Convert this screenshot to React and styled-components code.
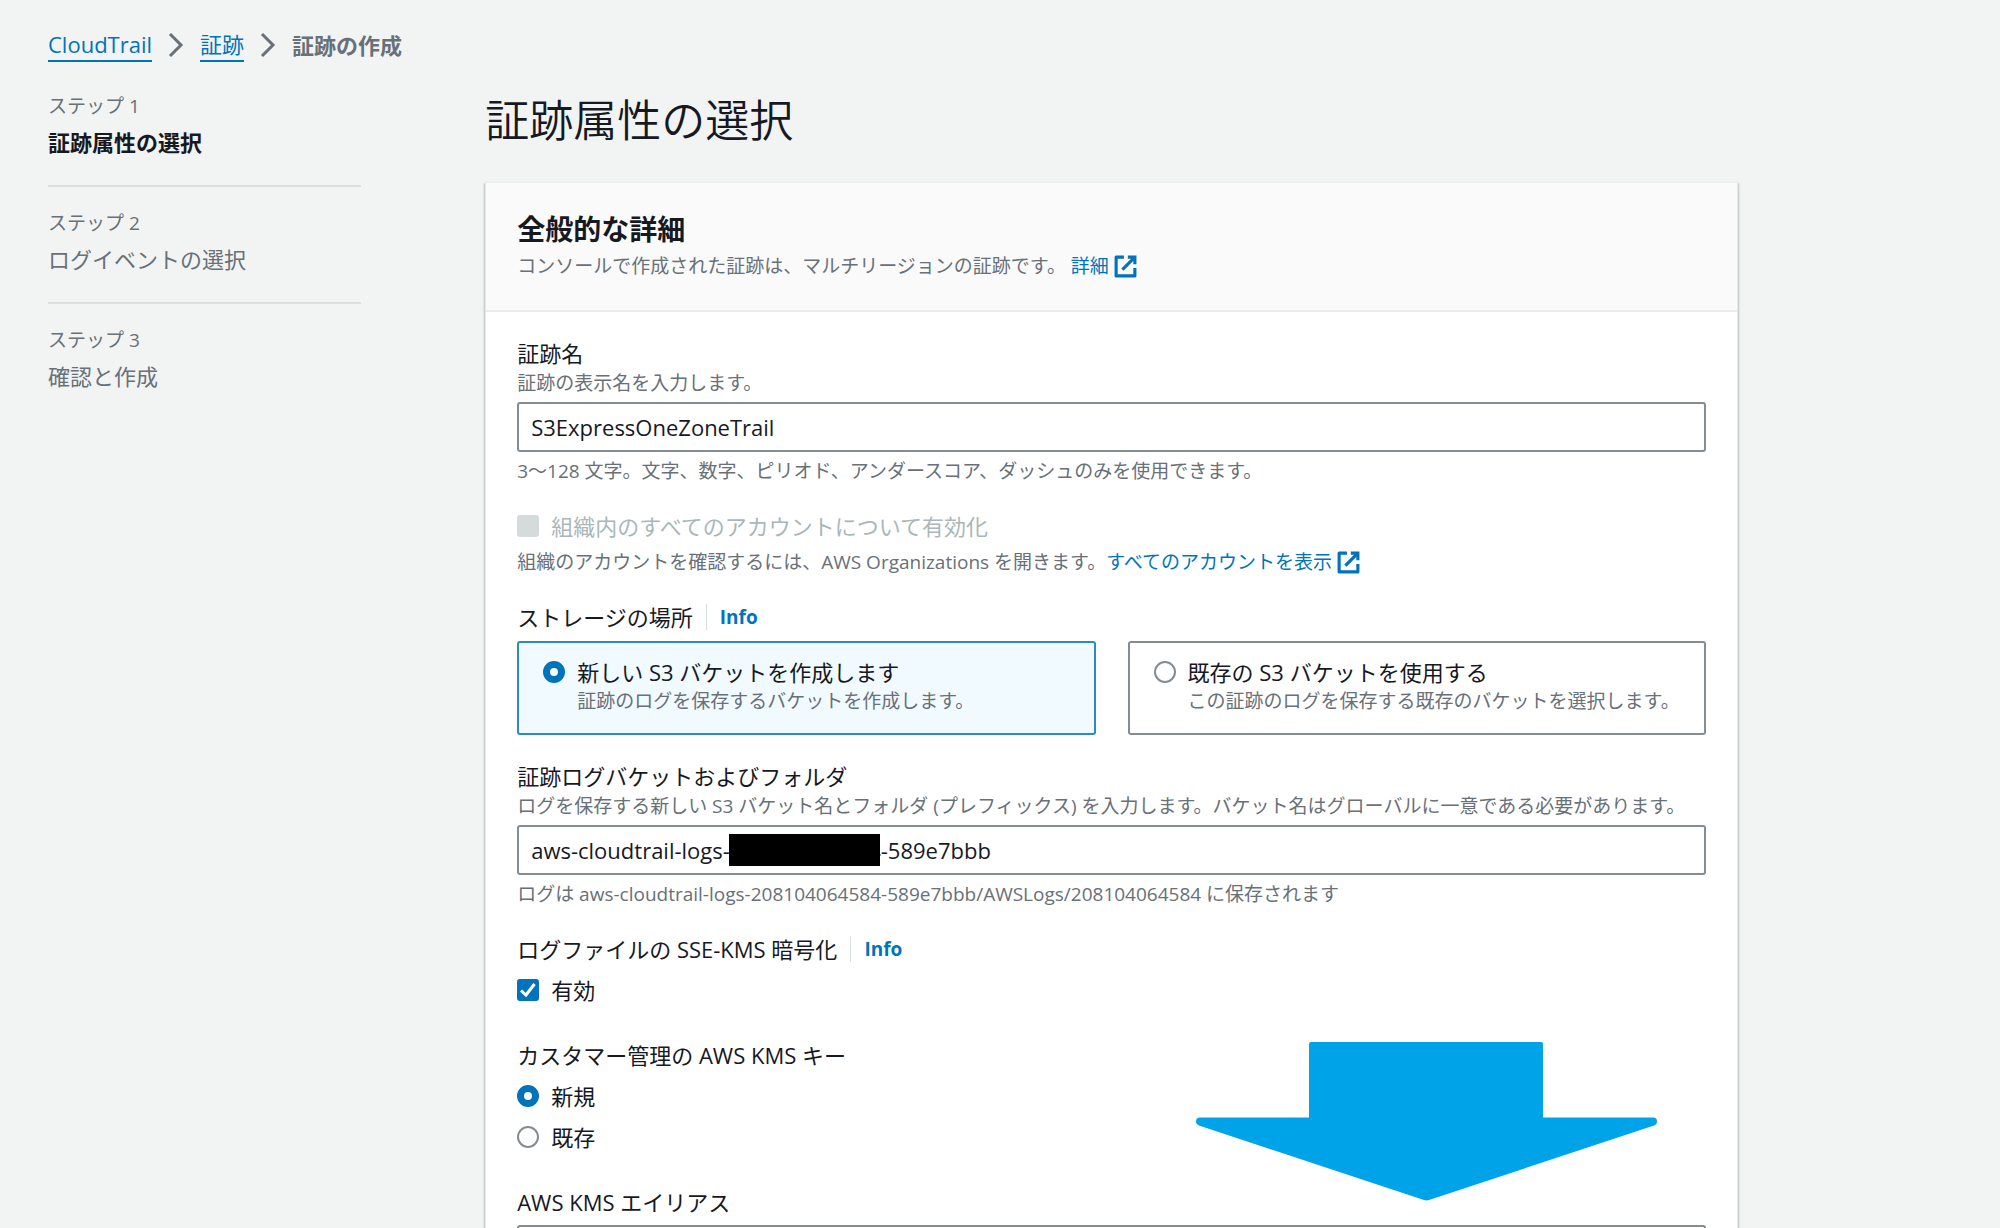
import React, { useState } from 'react';
import styled, { createGlobalStyle } from 'styled-components';

const style = {
    'font': '"Open Sans", "Noto Sans CJK JP", sans-serif',
    'page-background': '#f2f4f4',
    'text-color': '#16191f',
    'text-color-desc': '#687078',
    'text-color-disabled': '#aab7b8',
    'link-color': '#0073bb',
    'border-color': '#858d94',
    'divider-color': '#d9dede',
    'arrow-color': '#00a2e8',
};

const GlobalStyle = createGlobalStyle`
    * {
        box-sizing: border-box;
    }
    body {
        margin: 0;
        background: ${style['page-background']};
        color: ${style['text-color']};
        font-family: ${style['font']};
        font-size: 22px;
        line-height: 30px;
    }
    a {
        color: ${style['link-color']};
        text-decoration: none;
    }
    input {
        font: inherit;
        color: inherit;
    }
`;

const Page = styled.div`
    position: relative;
    height: 100vh;
    overflow-y: auto;
    scrollbar-width: none;
    padding: 28px 262px 0 48px;
`;

const Breadcrumb = styled.nav`
    display: flex;
    align-items: center;
    gap: 16px;
    margin-bottom: 30px;
    line-height: 34px;
    a {
        border-bottom: 2px solid ${style['link-color']};
        line-height: 32px;
    }
    strong {
        color: ${style['text-color-desc']};
    }
`;

const Layout = styled.div`
    display: grid;
    grid-template-columns: 1fr 4fr;
    gap: 124px;
`;

const StepList = styled.ol`
    margin: 0;
    padding: 0;
    list-style: none;
    li + li {
        margin-top: 26px;
        padding-top: 22px;
        border-top: 2px solid ${style['divider-color']};
    }
`;

const StepNumber = styled.div`
    margin-bottom: 5px;
    color: ${style['text-color-desc']};
    font-size: 19px;
    line-height: 28px;
`;

const StepTitle = styled.div`
    color: ${props => props.$active ? style['text-color'] : style['text-color-desc']};
    font-weight: ${props => props.$active ? 700 : 400};
    line-height: 34px;
`;

const Title = styled.h1`
    margin: 0 0 34px;
    font-size: 44px;
    font-weight: 350;
    line-height: 56px;
`;

const Panel = styled.section`
    background: #fff;
    border: 1px solid #e4e8e8;
    border-top-color: #eaeded;
    box-shadow: 0 2px 2px rgba(0, 28, 36, .2), 1px 1px 2px rgba(0, 28, 36, .15), -1px 1px 2px rgba(0, 28, 36, .15);
`;

const PanelHeader = styled.header`
    padding: 26px 31px 30px;
    background: #fafafa;
    border-bottom: 2px solid #eaeded;
    h2 {
        margin: 0 0 3px;
        font-size: 28px;
        line-height: 40px;
    }
`;

const Form = styled.form`
    display: flex;
    flex-direction: column;
    gap: 26px;
    padding: 26px 31px 32px;
`;

const Hint = styled.div`
    color: ${style['text-color-desc']};
    font-size: 19px;
    line-height: 28px;
`;

const FieldLabel = styled.label`
    display: block;
    margin-bottom: 1px;
`;

const Legend = styled.div`
    display: flex;
    align-items: center;
`;

const InfoLink = styled.a`
    margin-left: 13px;
    padding-left: 13px;
    border-left: 1px solid ${style['divider-color']};
    font-size: 19px;
    font-weight: 700;
    line-height: 26px;
`;

const TextInput = styled.input`
    display: block;
    width: 100%;
    height: 50px;
    margin: 5px 0;
    padding: 0 12px;
    background: #fff;
    border: 2px solid ${style['border-color']};
    border-radius: 3px;
    ${FieldLabel} + & {
        margin-top: 8px;
    }
`;

const InputWrapper = styled.div`
    position: relative;
`;

// Covers the account id inside the bucket name
const Mask = styled.span`
    position: absolute;
    top: 9px;
    left: 212px;
    width: 151px;
    height: 32px;
    background: #000;
`;

const OptionGroup = styled.div`
    display: flex;
    flex-direction: column;
    gap: 11px;
    padding-bottom: 9px;
`;

const Option = styled.label`
    display: flex;
    align-items: center;
    gap: 12px;
    margin-bottom: ${props => props.$disabled ? '7px' : '0'};
    color: ${props => props.$disabled ? style['text-color-disabled'] : 'inherit'};
`;

const Radio = styled.input.attrs({ type: 'radio' })`
    appearance: none;
    flex: none;
    width: 22px;
    height: 22px;
    margin: 0;
    background: #fff;
    border: 2px solid ${style['border-color']};
    border-radius: 50%;
    &:checked {
        border: 7px solid ${style['link-color']};
    }
`;

const CheckboxBox = styled.span`
    display: grid;
    flex: none;
    width: 22px;
    height: 22px;
    input, svg {
        grid-area: 1 / 1;
    }
    input {
        appearance: none;
        width: 22px;
        height: 22px;
        margin: 0;
        background: #fff;
        border: 2px solid ${style['border-color']};
        border-radius: 3px;
    }
    input:checked {
        background: ${style['link-color']};
        border-color: ${style['link-color']};
    }
    input:disabled {
        background: #d5dbdb;
        border-color: #d5dbdb;
    }
    svg {
        pointer-events: none;
    }
`;

const Tiles = styled.div`
    display: grid;
    grid-template-columns: 1fr 1fr;
    gap: 32px;
    margin-top: 9px;
`;

const Tile = styled.label`
    display: grid;
    grid-template-columns: 22px 1fr;
    column-gap: 12px;
    align-items: center;
    padding: 14px 24px 18px;
    background: ${props => props.$selected ? '#f1faff' : '#fff'};
    border: 2px solid ${props => props.$selected ? '#2a8bc8' : style['border-color']};
    border-radius: 3px;
    ${Hint} {
        grid-column: 2;
    }
`;

const ExternalSvg = styled.svg`
    width: 25px;
    height: 25px;
    margin-left: 4px;
    vertical-align: -6px;
`;

const DownArrow = styled.svg`
    position: absolute;
    top: 1042px;
    left: 1196px;
    width: 461px;
    height: 159px;
    pointer-events: none;
`;

function ExternalIcon() {
    return (
        <ExternalSvg viewBox="0 0 16 16" fill="none" stroke="currentColor" strokeWidth="2" aria-hidden="true">
            <path d="M14 9v5H2V2h5" strokeLinejoin="round" />
            <path d="M9.5 2H14v4.5M6 10l8-8" />
        </ExternalSvg>
    );
}

function Chevron() {
    return (
        <svg width="16" height="26" viewBox="0 0 16 26" fill="none" stroke={style['text-color-desc']} strokeWidth="3" aria-hidden="true">
            <path d="M2 2l11 11L2 24" />
        </svg>
    );
}

function Checkbox(props) {
    return (
        <CheckboxBox>
            <input type="checkbox" {...props} />
            {props.checked && (
                <svg width="22" height="22" viewBox="0 0 22 22" fill="none" stroke="#fff" strokeWidth="3">
                    <path d="M4 11.5l5 4.5 8.5-11" />
                </svg>
            )}
        </CheckboxBox>
    );
}

const steps = ['証跡属性の選択', 'ログイベントの選択', '確認と作成'];

const buckets = [
    { key: 'new', label: '新しい S3 バケットを作成します', hint: '証跡のログを保存するバケットを作成します。' },
    { key: 'existing', label: '既存の S3 バケットを使用する', hint: 'この証跡のログを保存する既存のバケットを選択します。' },
];

const keys = [
    { key: 'new', label: '新規' },
    { key: 'existing', label: '既存' },
];

function App() {

    const [name, setName] = useState('S3ExpressOneZoneTrail');
    const [bucket, setBucket] = useState('new');
    const [bucketName, setBucketName] = useState('aws-cloudtrail-logs-208104064584-589e7bbb');
    const [encrypted, setEncrypted] = useState(true);
    const [kmsKey, setKmsKey] = useState('new');
    const [alias, setAlias] = useState('');

    return (
        <Page>
            <GlobalStyle />
            <Breadcrumb>
                <a href="#cloudtrail">CloudTrail</a>
                <Chevron />
                <a href="#trails">証跡</a>
                <Chevron />
                <strong>証跡の作成</strong>
            </Breadcrumb>
            <Layout>
                <StepList>
                    {steps.map((title, index) => (
                        <li key={title}>
                            <StepNumber>ステップ {index + 1}</StepNumber>
                            <StepTitle $active={index === 0}>{title}</StepTitle>
                        </li>
                    ))}
                </StepList>
                <main>
                    <Title>証跡属性の選択</Title>
                    <Panel>
                        <PanelHeader>
                            <h2>全般的な詳細</h2>
                            <Hint>
                                コンソールで作成された証跡は、マルチリージョンの証跡です。 <a href="#detail">詳細<ExternalIcon /></a>
                            </Hint>
                        </PanelHeader>
                        <Form>
                            <div>
                                <FieldLabel htmlFor="trail-name">証跡名</FieldLabel>
                                <Hint>証跡の表示名を入力します。</Hint>
                                <TextInput id="trail-name" value={name} onChange={(e) => setName(e.target.value)} />
                                <Hint>3～128 文字。文字、数字、ピリオド、アンダースコア、ダッシュのみを使用できます。</Hint>
                            </div>
                            <div>
                                <Option $disabled>
                                    <Checkbox disabled />
                                    組織内のすべてのアカウントについて有効化
                                </Option>
                                <Hint>
                                    組織のアカウントを確認するには、AWS Organizations を開きます。<a href="#accounts">すべてのアカウントを表示<ExternalIcon /></a>
                                </Hint>
                            </div>
                            <div role="radiogroup" aria-labelledby="storage">
                                <Legend>
                                    <span id="storage">ストレージの場所</span>
                                    <InfoLink href="#storage-info">Info</InfoLink>
                                </Legend>
                                <Tiles>
                                    {buckets.map(item => (
                                        <Tile key={item.key} $selected={bucket === item.key}>
                                            <Radio name="bucket" checked={bucket === item.key} onChange={() => setBucket(item.key)} />
                                            <span>{item.label}</span>
                                            <Hint>{item.hint}</Hint>
                                        </Tile>
                                    ))}
                                </Tiles>
                            </div>
                            <div>
                                <FieldLabel htmlFor="bucket-name">証跡ログバケットおよびフォルダ</FieldLabel>
                                <Hint>ログを保存する新しい S3 バケット名とフォルダ (プレフィックス) を入力します。バケット名はグローバルに一意である必要があります。</Hint>
                                <InputWrapper>
                                    <TextInput id="bucket-name" value={bucketName} onChange={(e) => setBucketName(e.target.value)} />
                                    <Mask />
                                </InputWrapper>
                                <Hint>ログは aws-cloudtrail-logs-208104064584-589e7bbb/AWSLogs/208104064584 に保存されます</Hint>
                            </div>
                            <OptionGroup>
                                <Legend>
                                    <span>ログファイルの SSE-KMS 暗号化</span>
                                    <InfoLink href="#kms-info">Info</InfoLink>
                                </Legend>
                                <Option>
                                    <Checkbox checked={encrypted} onChange={(e) => setEncrypted(e.target.checked)} />
                                    有効
                                </Option>
                            </OptionGroup>
                            <OptionGroup role="radiogroup" aria-labelledby="kms-key">
                                <span id="kms-key">カスタマー管理の AWS KMS キー</span>
                                {keys.map(item => (
                                    <Option key={item.key}>
                                        <Radio name="kms-key" checked={kmsKey === item.key} onChange={() => setKmsKey(item.key)} />
                                        {item.label}
                                    </Option>
                                ))}
                            </OptionGroup>
                            <div>
                                <FieldLabel htmlFor="kms-alias">AWS KMS エイリアス</FieldLabel>
                                <TextInput id="kms-alias" value={alias} onChange={(e) => setAlias(e.target.value)} />
                            </div>
                        </Form>
                    </Panel>
                </main>
            </Layout>
            <DownArrow viewBox="0 0 461 160" preserveAspectRatio="none" fill={style['arrow-color']} aria-hidden="true">
                <path d="M115 0H345Q347 0 347 2V76H457Q461 76 461 80Q461 83 458 84L233 159Q230.500 160 228 159L3 84Q0 83 0 80Q0 76 4 76H113V2Q113 0 115 0Z" />
            </DownArrow>
        </Page>
    );
}

export default App;
